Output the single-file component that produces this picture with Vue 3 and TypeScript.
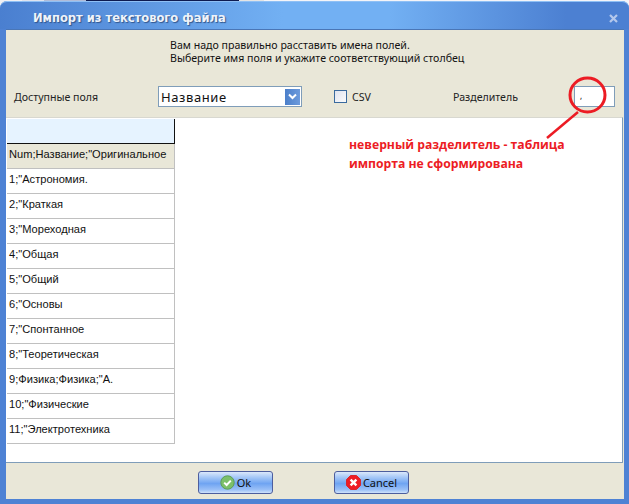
<script setup lang="ts">
const rows: string[] = [
  '1;"Астрономия.',
  '2;"Краткая',
  '3;"Мореходная',
  '4;"Общая',
  '5;"Общий',
  '6;"Основы',
  '7;"Спонтанное',
  '8;"Теоретическая',
  '9;Физика;Физика;"А.',
  '10;"Физические',
  '11;"Электротехника'
]
</script>

<template>
  <div class="screen">
    <div class="window">
      <header class="title">
        <span class="title-text">Импорт из текстового файла</span>
        <svg class="close" width="9" height="9" viewBox="0 0 9 9">
          <path d="M1 1l7 7M8 1l-7 7" stroke="#b4c8ec" stroke-width="2.2" fill="none" />
        </svg>
      </header>
      <div class="client">
        <div class="hint">
          <div>Вам надо правильно расставить имена полей.</div>
          <div>Выберите имя поля и укажите соответствующий столбец</div>
        </div>
        <div class="controls">
          <span class="lbl-fields">Доступные поля</span>
          <div class="combo">
            <span class="combo-text">Название</span>
            <span class="combo-btn">
              <svg width="9" height="7" viewBox="0 0 9 7">
                <path d="M1 1.5l3.5 3.5 3.5-3.5" stroke="#fff" stroke-width="2" fill="none" />
              </svg>
            </span>
          </div>
          <span class="check"></span>
          <span class="lbl-csv">CSV</span>
          <span class="lbl-sep">Разделитель</span>
          <div class="sep-input"><span class="comma">,</span></div>
        </div>
        <div class="panel">
          <div class="grid">
            <div class="grid-top"></div>
            <div class="cell cell-head">Num;Название;"Оригинальное</div>
            <div v-for="r in rows" :key="r" class="cell">{{ r }}</div>
          </div>
          <div class="note">неверный разделитель - таблица<br />импорта не сформирована</div>
        </div>
        <footer class="footer">
          <button class="btn btn-ok" type="button">
            <svg width="15" height="15" viewBox="0 0 15 15">
              <circle cx="7.5" cy="7.5" r="6.7" fill="#7cc06a" stroke="#5c9e58" />
              <path d="M4.2 7.6l2.4 2.4 4.2-4.4" stroke="#fff" stroke-width="2" fill="none" />
            </svg>
            <span>Ok</span>
          </button>
          <button class="btn btn-cancel" type="button">
            <svg width="15" height="15" viewBox="0 0 15 15">
              <path d="M4.5.5h6l4 4v6l-4 4h-6l-4-4v-6z" fill="#ee1c25" stroke="#d8262c" />
              <path d="M4.6 4.6l5.8 5.8M10.4 4.6l-5.8 5.8" stroke="#fff" stroke-width="2.4" fill="none" />
            </svg>
            <span>Cancel</span>
          </button>
        </footer>
      </div>
    </div>
    <svg class="mark" width="629" height="504" viewBox="0 0 629 504">
      <ellipse cx="587.5" cy="95" rx="17.5" ry="17" fill="none" stroke="#ec1c24" stroke-width="3" />
      <path d="M578 112L547 138" stroke="#ec1c24" stroke-width="2.5" fill="none" />
    </svg>
  </div>
</template>

<style scoped>
.screen {
  position: relative;
  width: 629px;
  height: 504px;
  overflow: hidden;
  background: linear-gradient(90deg, #f0f0f4 0 22px, #dfe3ee 22px 44px, #b0bcd8 44px 86px, #0d1a50 86px 239px, #e4e4e4 239px 264px, #f4f4f8 264px);
  font-family: "Noto Sans", sans-serif;
}
.window {
  height: 503px;
  margin-top: 1px;
  display: flex;
  flex-direction: column;
  background: #4e82d4;
  border-radius: 7px 7px 0 0;
  padding: 0 5px 5px 6px;
  box-sizing: border-box;
}
.title {
  height: 28px;
  margin: 0 -5px 0 -6px;
  padding: 5px 11px 0 33px;
  box-sizing: border-box;
  flex: none;
  display: flex;
  align-items: center;
  justify-content: space-between;
  border-radius: 7px 7px 0 0;
  border-top: 1px solid #8fc0f5;
  background: linear-gradient(90deg, #4a7fd0 0%, #72b0f3 45%, #72b0f3 62%, #4c80d2 90%);
}
.title-text {
  font-family: "DejaVu Sans", sans-serif;
  font-size: 11.5px;
  font-weight: 700;
  color: #eef3fa;
  text-shadow: 1px 1px 1px #30558c;
}
.close { flex: none; }
.client {
  flex: 1;
  display: flex;
  flex-direction: column;
  min-height: 0;
  background: #e9e7d8;
  border-top: 1px solid #4a76b6;
}
.hint {
  height: 49px;
  padding: 9px 0 0 164px;
  box-sizing: border-box;
  font-size: 10.6px;
  line-height: 13px;
  color: #111;
  flex: none;
}
.controls {
  height: 38px;
  flex: none;
  display: flex;
  align-items: center;
  font-size: 10.6px;
  color: #222;
  padding-bottom: 3px;
  box-sizing: border-box;
}
.lbl-fields { width: 144px; margin-left: 8px; }
.combo {
  width: 144px;
  height: 21px;
  box-sizing: border-box;
  border: 1px solid #7f9db9;
  background: #fff;
  display: flex;
  align-items: center;
  justify-content: space-between;
}
.combo-text {
  padding-left: 2px;
  font-size: 13px;
  color: #111;
  letter-spacing: 0.6px;
}
.combo-btn {
  width: 15px;
  height: 16px;
  margin-right: 1px;
  background: linear-gradient(90deg, #4b7fca, #6d9bdc);
  display: flex;
  align-items: center;
  justify-content: center;
}
.check {
  width: 13px;
  height: 13px;
  margin-left: 32px;
  box-sizing: border-box;
  border: 1px solid #3a6a9e;
  background: linear-gradient(135deg, #dfe3ef, #fbfbfb);
}
.lbl-csv { margin-left: 5px; width: 101px; }
.lbl-sep { width: 121px; }
.sep-input {
  width: 41px;
  height: 21px;
  box-sizing: border-box;
  border: 1px solid #7f9db9;
  background: #fff;
  position: relative;
}
.comma {
  position: absolute;
  left: 5px;
  top: 0;
  font-size: 8px;
  line-height: 18px;
  color: #000;
}
.panel {
  flex: 1;
  display: flex;
  min-height: 0;
  position: relative;
  background: #fff;
  margin: 0 1px 0 0;
  border-top: 1px solid #d8d8d0;
  border-right: 1px solid #7f9db9;
  border-bottom: 1px solid #7f9db9;
  box-sizing: border-box;
}
.grid {
  width: 168px;
  flex: none;
  align-self: flex-start;
  margin-left: 1px;
  font-family: "Liberation Sans", sans-serif;
  font-size: 11.1px;
  color: #111;
}
.grid-top {
  height: 25px;
  box-sizing: border-box;
  margin-top: 1px;
  background: #e6f3ff;
  border-right: 1px solid #111;
  border-bottom: 1px solid #111;
}
.cell {
  height: 25px;
  box-sizing: border-box;
  padding-left: 2px;
  line-height: 21px;
  background: #fff;
  border-right: 1px solid #c0c0c0;
  border-bottom: 1px solid #c0c0c0;
  white-space: nowrap;
  overflow: hidden;
}
.cell-head {
  background: #e9e7d8;
}
.note {
  margin: 17px 0 0 174px;
  font-family: "Open Sans", sans-serif;
  font-weight: 700;
  font-size: 12.2px;
  line-height: 19px;
  color: #ec1c24;
}
.footer {
  height: 36px;
  flex: none;
  display: flex;
  align-items: flex-start;
  padding-top: 8px;
  box-sizing: border-box;
}
.btn {
  width: 75px;
  height: 23px;
  box-sizing: border-box;
  padding: 0;
  display: flex;
  align-items: center;
  justify-content: center;
  gap: 2px;
  border: 1px solid #4d5e9e;
  border-radius: 3px;
  background: linear-gradient(180deg, #dbe8fb 0%, #a6c8f7 25%, #6fa4f2 55%, #9cc1f7 85%, #cfe2fb 100%);
  font-family: "Noto Sans", sans-serif;
  font-size: 11px;
  color: #111;
}
.btn-ok { margin-left: 192px; }
.btn-cancel { margin-left: 61px; }
.mark {
  position: absolute;
  left: 0;
  top: 0;
  pointer-events: none;
}
</style>
